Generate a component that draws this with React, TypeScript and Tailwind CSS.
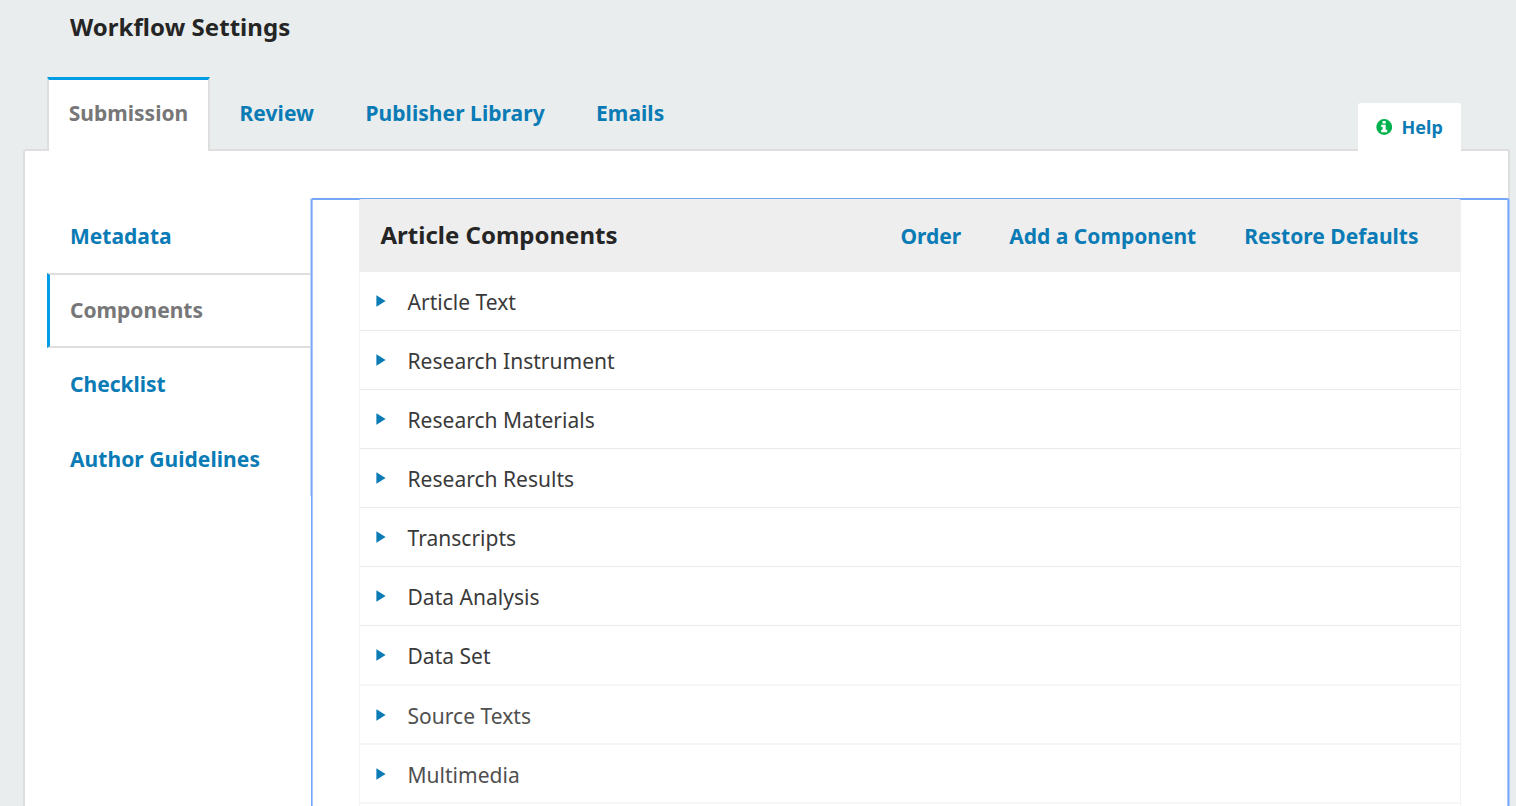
import React from "react";

const tabs = ["Review", "Publisher Library", "Emails"];
const rows = [
  "Article Text",
  "Research Instrument",
  "Research Materials",
  "Research Results",
  "Transcripts",
  "Data Analysis",
  "Data Set",
  "Source Texts",
  "Multimedia",
];

function Caret() {
  return (
    <svg width="10" height="12" viewBox="0 0 10 12" className="block shrink-0">
      <path d="M0.4 0.2 L9.6 6 L0.4 11.8 Z" fill="#0a7bb5" />
    </svg>
  );
}

function InfoIcon() {
  return (
    <svg width="16" height="16" viewBox="0 0 16 16" className="block">
      <circle cx="8.2" cy="8" r="7.9" fill="#00b24e" />
      <path
        d="M6.5 2h3.2v2.6H6.5z M5.2 5.8h4.5v5h1.5v2.4h-6v-2.4h1.4V8.1H5.2z"
        fill="#ffffff"
      />
    </svg>
  );
}

function Row({ label, index }: { label: string; index: number }) {
  return (
    <li
      className={
        "flex shrink-0 items-center pl-[16px] " +
        (index === 6 ? "h-[60px] " : "h-[59px] ") +
        (index >= 6
          ? "border-b-2 border-[#f6f6f6]"
          : "border-b border-[#eaeaea]")
      }
    >
      <Caret />
      <span
        className={
          "ml-[21.5px] pt-[2px] text-[21px] leading-[30px] tracking-[0.02px] " +
          (index >= 7 ? "text-[#505050]" : "text-[#3a3a3a]")
        }
      >
        {label}
      </span>
    </li>
  );
}

export default function App() {
  return (
    <div className="flex h-[806px] w-[1516px] flex-col overflow-hidden bg-[#e9eded] font-['Noto_Sans',sans-serif] text-[21px] font-bold text-[#0a7bb5]">
      <h1 className="h-[77px] shrink-0 pl-[70px] pt-[9px] text-[24px] leading-[36px] tracking-[0.05px] text-[#252525]">
        Workflow Settings
      </h1>

      <div className="z-10 -mb-[2px] flex h-[74px] shrink-0 justify-between pl-[47px] pr-[55px]">
        <nav className="flex">
          <a className="flex w-[163px] justify-center border-x-2 border-t-[3px] border-x-[#dedede] border-t-[#009de5] bg-white pt-[17px] leading-[32px] text-[#777777]">
            Submission
          </a>
          <div className="flex gap-[51.3px] pl-[29.5px] pt-[20px] leading-[32px] tracking-[0.06px]">
            {tabs.map((t) => (
              <a key={t}>{t}</a>
            ))}
          </div>
        </nav>
        <a className="mt-[26px] flex w-[103px] items-center gap-[9.5px] rounded-t-[3px] bg-white pl-[18px] text-[18px] leading-[28px]">
          <InfoIcon />
          <span>Help</span>
        </a>
      </div>

      <main className="ml-[23px] flex h-[680px] w-[1487px] shrink-0 rounded-t-[3px] border-2 border-[#dedede] bg-white pt-[47px]">
        <nav className="ml-[22px] flex h-[298px] w-[264px] shrink-0 flex-col border-r border-[#c4d7f5] leading-[32px]">
          <a className="h-[75px] pl-[23px] pt-[22px]">Metadata</a>
          <a className="h-[75px] border-y-2 border-l-[3px] border-y-[#dedede] border-l-[#009de5] pl-[20px] pt-[19px] text-[#777777]">
            Components
          </a>
          <a className="h-[74px] pl-[23px] pt-[20px]">Checklist</a>
          <a className="h-[74px] pl-[23px] pt-[21px] tracking-[0.05px]">
            Author Guidelines
          </a>
        </nav>

        <section className="-mr-[1px] flex flex-1 rounded-t-[2px] border-x border-t-2 border-[#76a6f8] pl-[47px] pr-[47px] shadow-[inset_1px_0_0_#a9c8fb,inset_-1px_0_0_#a9c8fb,1px_0_0_#a9c8fb]">
          <div className="-mt-[1px] flex flex-1 flex-col">
            <header className="flex h-[73px] shrink-0 items-center justify-between rounded-t-[2px] bg-[#eeeeee] pl-[21.5px] pr-[42.5px]">
              <h2 className="-mt-[2px] text-[24px] leading-[36px] text-[#252525]">
                Article Components
              </h2>
              <div className="flex gap-[48px] leading-[32px]">
                <a>Order</a>
                <a>Add a Component</a>
                <a>Restore Defaults</a>
              </div>
            </header>
            <ul className="flex flex-1 flex-col border-x border-[#f4f4f4] font-normal">
              {rows.map((label, i) => (
                <Row key={label} label={label} index={i} />
              ))}
            </ul>
          </div>
        </section>
      </main>
    </div>
  );
}
